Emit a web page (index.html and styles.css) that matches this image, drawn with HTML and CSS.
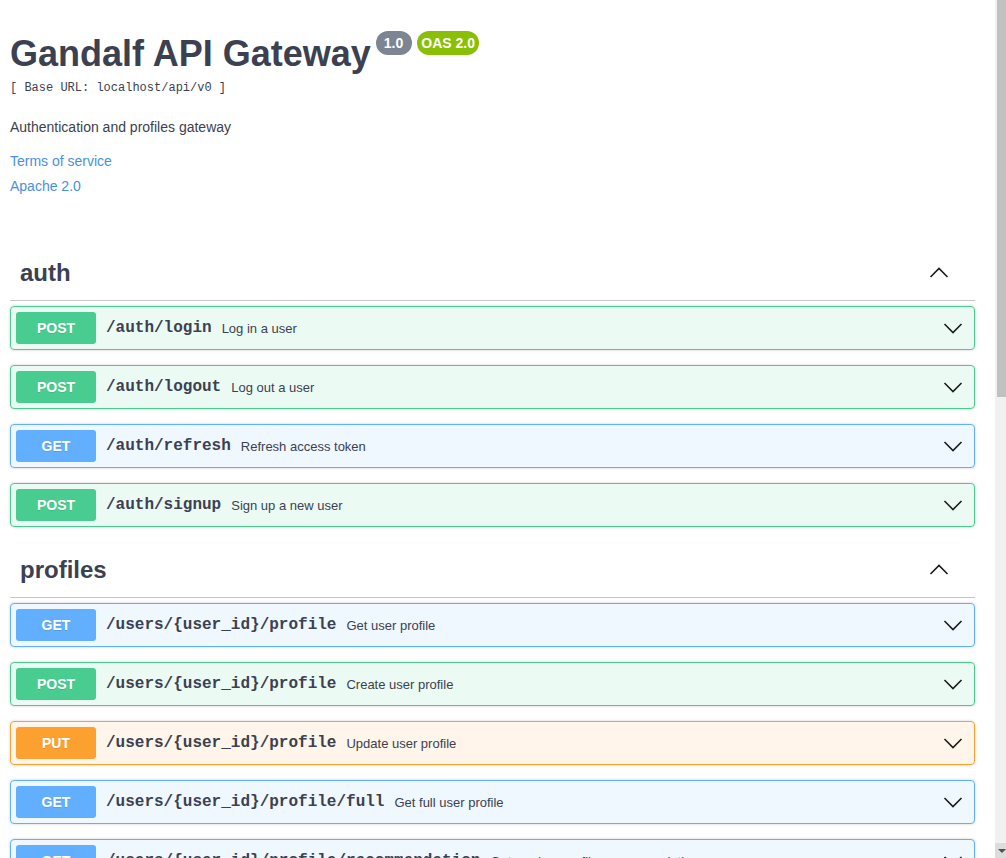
FILE: index.html
```html
<!DOCTYPE html>
<html lang="en">
<head>
<meta charset="utf-8">
<title>Gandalf API Gateway</title>
<link rel="stylesheet" href="styles.css">
</head>
<body>
<div class="page">
<div class="wrapper">
  <div class="info">
    <div class="title-row">
      <h2 class="title">Gandalf API Gateway</h2>
      <span class="stamp stamp-version">1.0</span>
      <span class="stamp stamp-oas">OAS 2.0</span>
    </div>
    <div class="base-url">[ Base URL: localhost/api/v0 ]</div>
    <p class="description">Authentication and profiles gateway</p>
    <div class="link-row"><a class="link" href="#">Terms of service</a></div>
    <div class="link-row"><a class="link" href="#">Apache 2.0</a></div>
  </div>

  <section class="tag-section">
    <h3 class="tag">
      <span class="tag-name">auth</span>
      <svg class="arrow-up" width="20" height="20" viewBox="0 0 20 20"><polyline points="1.5,14 10,5.5 18.5,14" fill="none" stroke="#1b1b1b" stroke-width="1.6"/></svg>
    </h3>
    <div class="opblock post"><span class="method">POST</span><span class="path">/auth/login</span><span class="desc">Log in a user</span><svg class="arrow-down" width="20" height="20" viewBox="0 0 20 20"><polyline points="1.5,6 10,14.5 18.5,6" fill="none" stroke="#1b1b1b" stroke-width="1.6"/></svg></div>
    <div class="opblock post"><span class="method">POST</span><span class="path">/auth/logout</span><span class="desc">Log out a user</span><svg class="arrow-down" width="20" height="20" viewBox="0 0 20 20"><polyline points="1.5,6 10,14.5 18.5,6" fill="none" stroke="#1b1b1b" stroke-width="1.6"/></svg></div>
    <div class="opblock get"><span class="method">GET</span><span class="path">/auth/refresh</span><span class="desc">Refresh access token</span><svg class="arrow-down" width="20" height="20" viewBox="0 0 20 20"><polyline points="1.5,6 10,14.5 18.5,6" fill="none" stroke="#1b1b1b" stroke-width="1.6"/></svg></div>
    <div class="opblock post"><span class="method">POST</span><span class="path">/auth/signup</span><span class="desc">Sign up a new user</span><svg class="arrow-down" width="20" height="20" viewBox="0 0 20 20"><polyline points="1.5,6 10,14.5 18.5,6" fill="none" stroke="#1b1b1b" stroke-width="1.6"/></svg></div>
  </section>

  <section class="tag-section">
    <h3 class="tag">
      <span class="tag-name">profiles</span>
      <svg class="arrow-up" width="20" height="20" viewBox="0 0 20 20"><polyline points="1.5,14 10,5.5 18.5,14" fill="none" stroke="#1b1b1b" stroke-width="1.6"/></svg>
    </h3>
    <div class="opblock get"><span class="method">GET</span><span class="path">/users/{user_id}/profile</span><span class="desc">Get user profile</span><svg class="arrow-down" width="20" height="20" viewBox="0 0 20 20"><polyline points="1.5,6 10,14.5 18.5,6" fill="none" stroke="#1b1b1b" stroke-width="1.6"/></svg></div>
    <div class="opblock post"><span class="method">POST</span><span class="path">/users/{user_id}/profile</span><span class="desc">Create user profile</span><svg class="arrow-down" width="20" height="20" viewBox="0 0 20 20"><polyline points="1.5,6 10,14.5 18.5,6" fill="none" stroke="#1b1b1b" stroke-width="1.6"/></svg></div>
    <div class="opblock put"><span class="method">PUT</span><span class="path">/users/{user_id}/profile</span><span class="desc">Update user profile</span><svg class="arrow-down" width="20" height="20" viewBox="0 0 20 20"><polyline points="1.5,6 10,14.5 18.5,6" fill="none" stroke="#1b1b1b" stroke-width="1.6"/></svg></div>
    <div class="opblock get"><span class="method">GET</span><span class="path">/users/{user_id}/profile/full</span><span class="desc">Get full user profile</span><svg class="arrow-down" width="20" height="20" viewBox="0 0 20 20"><polyline points="1.5,6 10,14.5 18.5,6" fill="none" stroke="#1b1b1b" stroke-width="1.6"/></svg></div>
    <div class="opblock get"><span class="method">GET</span><span class="path">/users/{user_id}/profile/recommendation</span><span class="desc">Get random profile recommendation</span><svg class="arrow-down" width="20" height="20" viewBox="0 0 20 20"><polyline points="1.5,6 10,14.5 18.5,6" fill="none" stroke="#1b1b1b" stroke-width="1.6"/></svg></div>
  </section>
</div>
</div>
<div class="scrollbar" aria-hidden="true">
  <div class="scroll-thumb"></div>
  <div class="scroll-track"></div>
  <div class="scroll-arrow"><span class="scroll-triangle"></span></div>
</div>
</body>
</html>
```

FILE: styles.css
```css
html, body {
  margin: 0;
  padding: 0;
  background: #fff;
  overflow: hidden;
}

body {
  display: flex;
  height: 100vh;
  font-family: "Liberation Sans", Arial, sans-serif;
  color: #3b4151;
}

.page {
  flex: 1;
  min-width: 0;
  overflow: hidden;
}

.wrapper {
  padding: 0 20px 0 10px;
}

.scrollbar {
  flex: none;
  width: 11px;
  display: flex;
  flex-direction: column;
  background: #f1f1f1;
}

.scroll-thumb {
  height: 397px;
  margin-left: 2px;
  background: #c1c1c1;
}

.scroll-track {
  flex: 1;
}

.scroll-arrow {
  height: 15px;
  background: #dcdcdc;
  display: flex;
  align-items: center;
  padding-left: 3px;
}

.scroll-triangle {
  width: 0;
  height: 0;
  border-left: 4px solid transparent;
  border-right: 4px solid transparent;
  border-top: 4px solid #505050;
}

.info {
  padding-top: 33px;
  padding-bottom: 44px;
}

.title-row {
  display: flex;
  align-items: flex-start;
}

.title {
  margin: 0;
  font-size: 36px;
  line-height: 41px;
  font-weight: 700;
  color: #3b4151;
}

.stamp {
  display: inline-block;
  margin-left: 5px;
  margin-top: -2px;
  border-radius: 57px;
  color: #fff;
  font-size: 14px;
  font-weight: 700;
  line-height: 20px;
  padding: 2px 4px;
}

.stamp-version {
  background: #7d8492;
  padding: 2px 9px 2px 8px;
}

.stamp-oas {
  background: #89bf04;
}

.base-url {
  margin-top: 7px;
  font-family: "Liberation Mono", monospace;
  font-size: 12px;
  line-height: 14px;
  color: #3b4151;
}

.description {
  margin: 22px 0 14px;
  font-size: 14px;
  line-height: 20px;
}

.link-row {
  font-size: 14px;
  line-height: 20px;
  margin-bottom: 5px;
}

.link {
  color: #4990e2;
  text-decoration: none;
}

.tag {
  display: flex;
  align-items: center;
  margin: 0 0 5px;
  padding: 10px 20px 10px 10px;
  height: 35px;
  border-bottom: 1px solid rgba(59, 65, 81, 0.3);
  font-size: 24px;
  font-weight: 700;
  color: #3b4151;
}

.tag-name {
  flex: 1;
}

.arrow-up {
  margin-right: 6px;
}

.opblock {
  display: flex;
  align-items: center;
  margin: 0 0 15px;
  padding: 5px;
  height: 32px;
  border: 1px solid;
  border-radius: 4px;
  box-shadow: 0 0 3px rgba(0, 0, 0, 0.19);
}

.method {
  min-width: 80px;
  height: 32px;
  line-height: 32px;
  text-align: center;
  border-radius: 3px;
  color: #fff;
  font-size: 14px;
  font-weight: 700;
  text-shadow: 0 1px 0 rgba(0, 0, 0, 0.1);
}

.path {
  padding: 0 10px;
  font-family: "Liberation Mono", monospace;
  font-size: 16px;
  font-weight: 700;
  color: #3b4151;
}

.desc {
  flex: 1;
  font-size: 13px;
  color: #3b4151;
  white-space: nowrap;
  overflow: hidden;
}

.arrow-down {
  margin-right: 6px;
  flex: none;
}

.post {
  border-color: #49cc90;
  background: rgba(73, 204, 144, 0.1);
}

.post .method {
  background: #49cc90;
}

.get {
  border-color: #61affe;
  background: rgba(97, 175, 254, 0.1);
}

.get .method {
  background: #61affe;
}

.put {
  border-color: #fca130;
  background: rgba(252, 161, 48, 0.1);
}

.put .method {
  background: #fca130;
}
```
